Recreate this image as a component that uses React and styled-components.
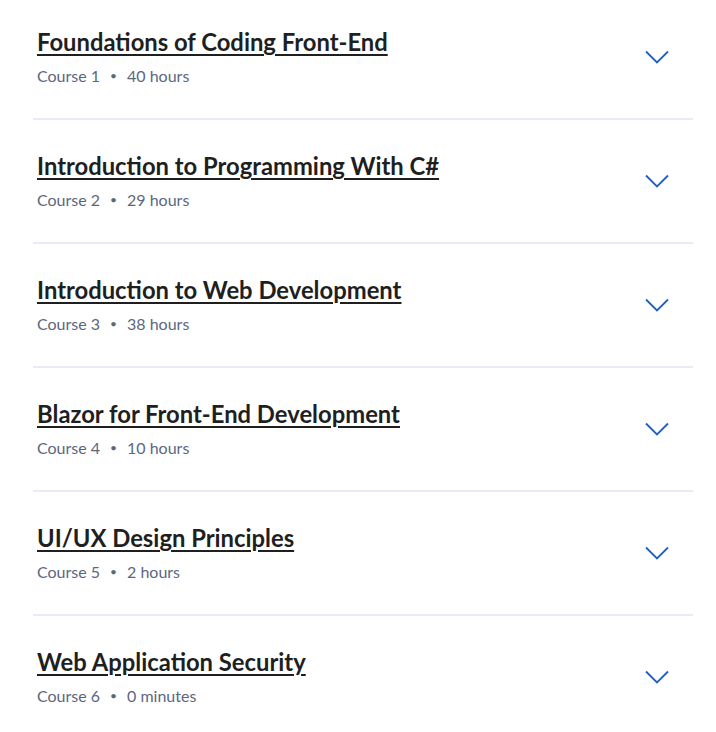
import React from "react";
import styled, { createGlobalStyle } from "styled-components";

const GlobalStyle = createGlobalStyle`
  body {
    margin: 0;
    background: #ffffff;
    font-family: "Lato", "Open Sans", sans-serif;
  }
`;

const List = styled.div`
  display: flex;
  flex-direction: column;
  padding: 0 23px 0 33px;
`;

const Row = styled.div`
  display: flex;
  align-items: center;
  justify-content: space-between;
  padding: 30px 24px 30px 4px;
  border-bottom: ${props => (props.last ? "none" : "2px solid #e9ebf6")};

  &:first-child {
    padding-top: 26px;
  }
`;

const Info = styled.div`
  display: flex;
  flex-direction: column;
  gap: 6px;
`;

const Title = styled.a`
  font-size: 23.8px;
  line-height: 32px;
  font-weight: 700;
  color: #1f1f1f;
  text-decoration: underline;
  text-decoration-thickness: 2px;
  text-underline-offset: 3px;
  cursor: pointer;
`;

const Meta = styled.div`
  display: flex;
  align-items: center;
  font-size: 16px;
  line-height: 24px;
  color: #5b6780;
`;

const Dot = styled.span`
  margin: 0 10px;
  font-size: 12px;
`;

const Toggle = styled.button`
  display: flex;
  align-items: center;
  justify-content: center;
  border: none;
  background: none;
  padding: 0;
  cursor: pointer;
`;

const courses = [
  { title: "Foundations of Coding Front-End", time: "40 hours" },
  { title: "Introduction to Programming With C#", time: "29 hours" },
  { title: "Introduction to Web Development", time: "38 hours" },
  { title: "Blazor for Front-End Development", time: "10 hours" },
  { title: "UI/UX Design Principles", time: "2 hours" },
  { title: "Web Application Security", time: "0 minutes" },
];

const Chevron = () => (
  <svg width="24" height="14" viewBox="0 0 24 14" fill="none">
    <path d="M1 1.5 L12 12.5 L23 1.5" stroke="#1f5fbf" strokeWidth="1.8" />
  </svg>
);

const App = () => {
  return (
    <>
      <GlobalStyle />
      <List>
        {courses.map((c, i) => (
          <Row key={c.title} last={i === courses.length - 1}>
            <Info>
              <div>
                <Title>{c.title}</Title>
              </div>
              <Meta>
                Course {i + 1}
                <Dot>•</Dot>
                {c.time}
              </Meta>
            </Info>
            <Toggle>
              <Chevron />
            </Toggle>
          </Row>
        ))}
      </List>
    </>
  );
};

export default App;
